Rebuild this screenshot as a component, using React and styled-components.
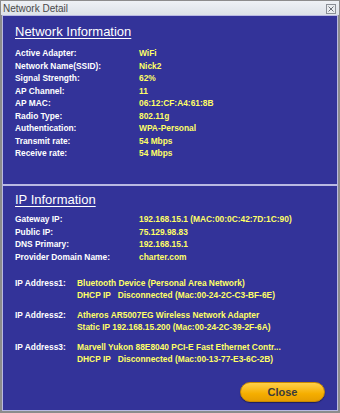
import React from "react";
import styled, { createGlobalStyle } from "styled-components";

const Global = createGlobalStyle`
  html, body { margin: 0; padding: 0; background: #ffffff; }
  body { font-family: "Liberation Sans", Arial, sans-serif; }
`;

const Window = styled.div`
  width: 340px;
  height: 413px;
  box-sizing: border-box;
  border: 1px solid #8c8c8c;
  background: #d9dde3;
  display: flex;
  flex-direction: column;
`;

const TitleBar = styled.div`
  height: 14px;
  display: flex;
  align-items: center;
  justify-content: space-between;
  padding: 0 3px 0 2px;
  background: linear-gradient(#eef1f5, #dde2e8);
  color: #4a4a4a;
  font-size: 10px;
`;

const CloseBox = styled.div`
  width: 8px;
  height: 8px;
  border: 1px solid #8a8f96;
  background: #e9ecef;
  display: flex;
  align-items: center;
  justify-content: center;
  margin-top: 2px;
`;

const Body = styled.div`
  flex: 1;
  display: flex;
  flex-direction: column;
  padding: 0 1px 1px 1px;
  background: #8c8c8c;
`;

const Section = styled.div`
  background: #333399;
  border: 1px solid #b9b9e2;
  padding: ${p => p.$pad || "8px 12px 0 12px"};
  height: ${p => p.$h || "auto"};
  flex: ${p => (p.$grow ? 1 : "none")};
  box-sizing: border-box;
  display: flex;
  flex-direction: column;
`;

const Heading = styled.div`
  color: #ffffff;
  font-size: 13px;
  text-decoration: underline;
  text-underline-offset: 2px;
  line-height: 16px;
  margin-bottom: ${p => p.$mb || "6px"};
`;

const Row = styled.div`
  display: grid;
  grid-template-columns: ${p => p.$label || "124px"} 1fr;
  font-size: 8.4px;
  font-weight: bold;
  line-height: ${p => p.$lh || "12.5px"};
  white-space: nowrap;
`;

const Label = styled.span`
  color: #ffffff;
`;

const Value = styled.span`
  color: #ffff66;
  white-space: pre;
`;

const AddrBlock = styled.div`
  margin-top: ${p => p.$top || "8px"};
`;

const Footer = styled.div`
  margin-top: auto;
  display: flex;
  justify-content: flex-end;
  padding: 0 0 8px 0;
`;

const CloseButton = styled.button`
  width: 85px;
  height: 20px;
  border-radius: 10px;
  border: 1px solid #c98a00;
  background: linear-gradient(#ffd04a, #f5ae00 60%, #e69e00);
  color: #3b3b3b;
  font-family: "Liberation Sans", Arial, sans-serif;
  font-weight: bold;
  font-size: 11px;
  box-shadow: 0 1px 1px rgba(0, 0, 0, 0.4);
  cursor: pointer;
`;

const network = [
  ["Active Adapter:", "WiFi"],
  ["Network Name(SSID):", "Nick2"],
  ["Signal Strength:", "62%"],
  ["AP Channel:", "11"],
  ["AP MAC:", "06:12:CF:A4:61:8B"],
  ["Radio Type:", "802.11g"],
  ["Authentication:", "WPA-Personal"],
  ["Transmit rate:", "54 Mbps"],
  ["Receive rate:", "54 Mbps"],
];

const ip = [
  ["Gateway IP:", "192.168.15.1 (MAC:00:0C:42:7D:1C:90)"],
  ["Public IP:", "75.129.98.83"],
  ["DNS Primary:", "192.168.15.1"],
  ["Provider Domain Name:", "charter.com"],
];

const addresses = [
  ["IP Address1:", "Bluetooth Device (Personal Area Network)", "DHCP IP   Disconnected (Mac:00-24-2C-C3-BF-6E)"],
  ["IP Address2:", "Atheros AR5007EG Wireless Network Adapter", "Static IP 192.168.15.200 (Mac:00-24-2C-39-2F-6A)"],
  ["IP Address3:", "Marvell Yukon 88E8040 PCI-E Fast Ethernet Contr...", "DHCP IP   Disconnected (Mac:00-13-77-E3-6C-2B)"],
];

export default function App() {
  return (
    <>
      <Global />
      <Window>
        <TitleBar>
          <span>Network Detail</span>
          <CloseBox>
            <svg width="6" height="6" viewBox="0 0 6 6">
              <path d="M0.5 0.5L5.5 5.5M5.5 0.5L0.5 5.5" stroke="#6b7078" strokeWidth="1" />
            </svg>
          </CloseBox>
        </TitleBar>
        <Body>
          <Section $h="170px" $pad="8px 12px 0 12px">
            <Heading $mb="7px">Network Information</Heading>
            {network.map(([l, v]) => (
              <Row key={l}>
                <Label>{l}</Label>
                <Value>{v}</Value>
              </Row>
            ))}
          </Section>
          <Section $grow $pad="6px 12px 0 12px">
            <Heading $mb="5px">IP Information</Heading>
            {ip.map(([l, v]) => (
              <Row key={l}>
                <Label>{l}</Label>
                <Value>{v}</Value>
              </Row>
            ))}
            {addresses.map(([l, a, b], i) => (
              <AddrBlock key={l} $top={i === 0 ? "14px" : "8px"}>
                <Row $label="62px" $lh="12px">
                  <Label>{l}</Label>
                  <Value>{a}</Value>
                </Row>
                <Row $label="62px" $lh="12px">
                  <span />
                  <Value>{b}</Value>
                </Row>
              </AddrBlock>
            ))}
            <Footer>
              <CloseButton>Close</CloseButton>
            </Footer>
          </Section>
        </Body>
      </Window>
    </>
  );
}
